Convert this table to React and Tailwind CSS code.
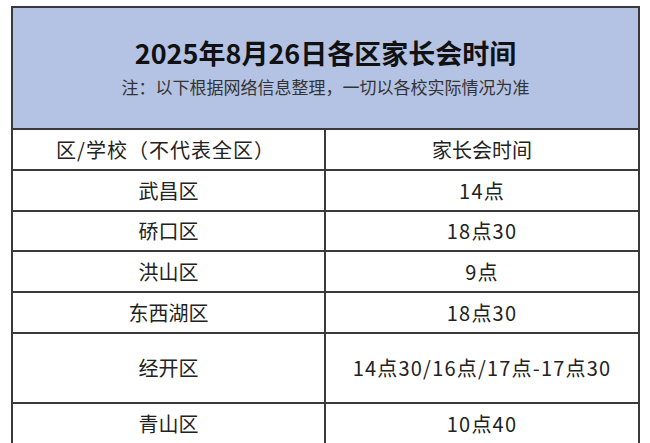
import React from 'react'

const rows = [
  { area: '武昌区', time: '14点', h: 'h-[41px]' },
  { area: '硚口区', time: '18点30', h: 'h-[40px]' },
  { area: '洪山区', time: '9点', h: 'h-[41px]' },
  { area: '东西湖区', time: '18点30', h: 'h-[41px]' },
  { area: '经开区', time: '14点30/16点/17点-17点30', h: 'h-[70px]' },
  { area: '青山区', time: '10点40', h: 'h-[41px]' },
]

const Row = ({ left, right, h, leftCls = '', rightCls = '' }) => (
  <div className={`grid grid-cols-[313px_1fr] border-b-2 border-[#3a3a3a] ${h}`}>
    <div className={`flex items-center justify-center border-r-2 border-[#3a3a3a] text-[20px] text-[#222] ${leftCls}`}>
      {left}
    </div>
    <div className={`flex items-center justify-center text-[20px] text-[#222] ${rightCls}`}>{right}</div>
  </div>
)

export default function App() {
  return (
    <div
      className="w-[650px] h-[443px] overflow-hidden bg-white pt-[6px] pl-[11px]"
      style={{ fontFamily: '"Noto Sans CJK SC", "Noto Sans", sans-serif' }}
    >
      <div className="w-[629px] border-t-2 border-x-2 border-[#3a3a3a]">
        {/* title band */}
        <div className="h-[122px] bg-[#b4c3e3] border-b-2 border-[#3a3a3a] flex flex-col items-center pt-[29px]">
          <div className="text-[27px] leading-[32px] font-bold text-[#111]">2025年8月26日各区家长会时间</div>
          <div className="mt-[7px] text-[17px] leading-[22px] text-[#333]">
            注：以下根据网络信息整理，一切以各校实际情况为准
          </div>
        </div>

        <Row left="区/学校（不代表全区）" right="家长会时间" h="h-[41px]" leftCls="tracking-[1px] pr-[6px]" />
        {rows.map((r) => (
          <Row key={r.area} left={r.area} right={r.time} h={r.h} rightCls="tracking-[1.2px]" />
        ))}
      </div>
    </div>
  )
}
